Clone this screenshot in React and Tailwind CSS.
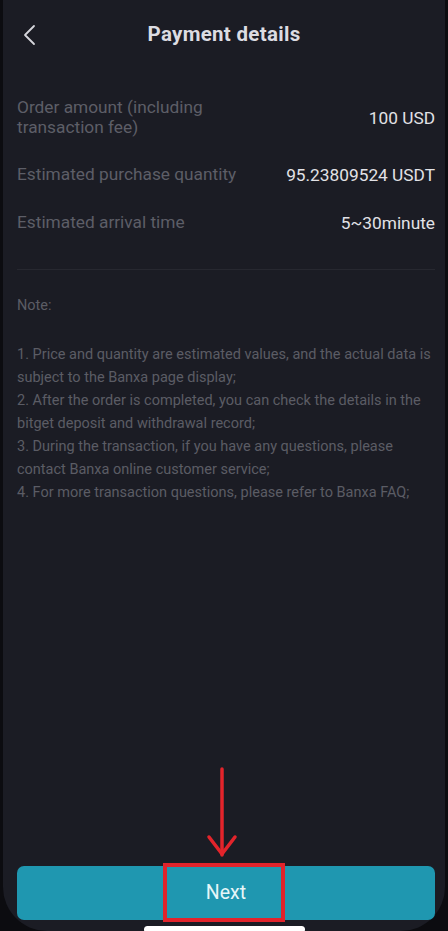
import React from "react";

export default function App() {
  const rows = [
    { label: "Order amount (including transaction fee)", value: "100 USD" },
    { label: "Estimated purchase quantity", value: "95.23809524 USDT" },
    { label: "Estimated arrival time", value: "5~30minute" },
  ];

  const notes = [
    "1. Price and quantity are estimated values, and the actual data is subject to the Banxa page display;",
    "2. After the order is completed, you can check the details in the bitget deposit and withdrawal record;",
    "3. During the transaction, if you have any questions, please contact Banxa online customer service;",
    "4. For more transaction questions, please refer to Banxa FAQ;",
  ];

  return (
    <div
      className="w-[448px] h-[931px] bg-[#0c0c10] overflow-hidden"
      style={{ fontFamily: "Roboto, 'Noto Sans', sans-serif" }}
    >
      <div className="relative h-full bg-[#1b1c24] rounded-b-[44px] ml-[3px] w-[442px] flex flex-col">
        {/* header */}
        <div className="relative flex items-center justify-center h-[68px]">
          <svg
            className="absolute left-[19px] top-[24px]"
            width="16"
            height="22"
            viewBox="0 0 16 22"
            fill="none"
          >
            <path d="M12 2 L3 11 L12 20" stroke="#d6d6dc" strokeWidth="1.8" strokeLinecap="round" strokeLinejoin="round" />
          </svg>
          <h1 className="text-[20.5px] font-bold text-[#dcdce2] tracking-[0.3px]">Payment details</h1>
        </div>

        {/* rows */}
        <div className="pl-[14px] pr-[10px] pt-[30px] flex flex-col gap-[28px]">
          {rows.map((r, i) => (
            <div key={i} className="flex items-center justify-between">
              <div className={`text-[17.3px] leading-[19.5px] text-[#5d5e67] ${i === 0 ? "w-[220px]" : ""}`}>
                {r.label}
              </div>
              <div className="text-[17.3px] leading-[20px] text-[#e2e2e6]">{r.value}</div>
            </div>
          ))}
        </div>
        <div className="ml-[14px] mr-[10px] mt-[36px] h-px bg-[#272830]" />

        {/* notes */}
        <div className="pl-[14px] pr-[10px] pt-[24px] text-[14.5px] text-[#5b5c65] leading-[23px]">
          <p>Note:</p>
          <div className="mt-[26px]">
            {notes.map((n, i) => (
              <p key={i}>{n}</p>
            ))}
          </div>
        </div>

        <div className="flex-1" />

        {/* arrow */}
        <div className="flex justify-center mb-[7px]">
          <svg width="32" height="92" viewBox="0 0 32 92" fill="none" className="ml-[-4px]">
            <path d="M16 2 V88" stroke="#e3242b" strokeWidth="3.5" strokeLinecap="round" />
            <path d="M3 70 L16 87 L29 70" stroke="#e3242b" strokeWidth="3.5" strokeLinecap="round" strokeLinejoin="round" />
          </svg>
        </div>

        {/* button */}
        <div className="pl-[14px] pr-[10px]">
          <div className="relative h-[54px] rounded-[7px] bg-[#1f97b0] flex items-center justify-center">
            <span className="text-[19.5px] text-[#e6f6f8]">Next</span>
            <div className="absolute left-[146px] top-[-3px] w-[122px] h-[59px] border-[4px] border-[#e1232b]" />
          </div>
        </div>

        {/* home indicator */}
        <div className="flex justify-center mt-[6px] mb-[-2px]">
          <div className="w-[161px] h-[7px] rounded-full bg-white" />
        </div>
      </div>
    </div>
  );
}
